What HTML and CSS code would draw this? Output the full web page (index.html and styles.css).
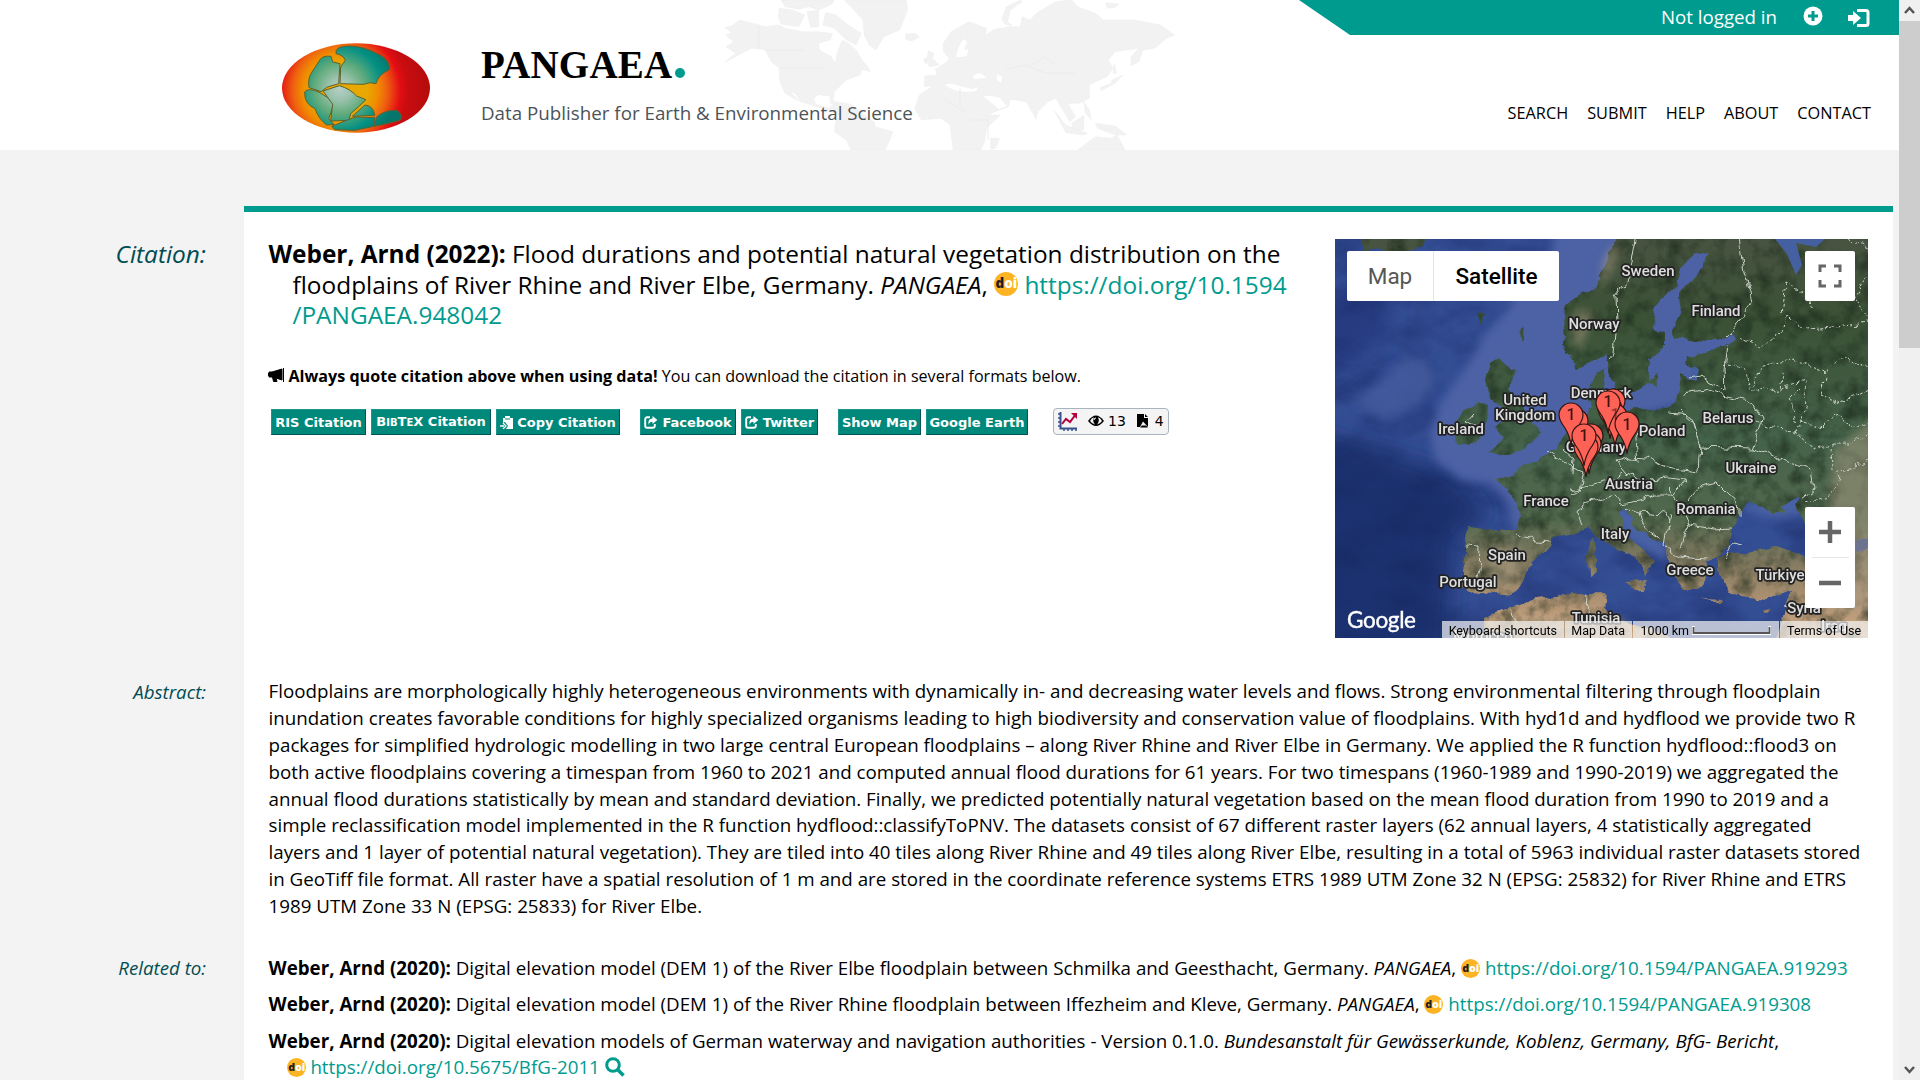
FILE: index.html
```html
<!DOCTYPE html>
<html lang="en"><head><meta charset="utf-8"><title>PANGAEA</title><link rel="stylesheet" href="styles.css"></head>
<body>
<svg class="defs" width="0" height="0">
<defs>
<symbol id="doi" viewBox="0 0 24 24"><circle cx="12" cy="12" r="12" fill="#fcb425"/><text x="1.500" y="16" font-family="Open Sans" font-weight="800" font-size="13.5" fill="#231f20">d</text><text x="10.2" y="16" font-family="Open Sans" font-weight="800" font-size="13.5" fill="#fff">oi</text></symbol>
<symbol id="share" viewBox="0 0 14 13"><path d="M6 1.3H3.2Q1.2 1.3 1.2 3.3v6.4q0 2 2 2h5.6q2 0 2-2V8" fill="none" stroke="#fff" stroke-width="1.9"/><path d="M8.5 0 13.4 4 8.5 8V5.7Q5.5 5.6 4.6 9 3.4 3 8.5 2.6z" fill="#fff"/></symbol>
</defs>
</svg>
<div class="page">
<main class="viewport">
<header class="header">
<svg class="world" width="490" height="150" viewBox="0 0 490 150"><g transform="translate(-20 0) scale(.3954 .3333)" fill="#f2f2f2" stroke="#ececec" stroke-width="1">
<path d="M100 60 148 74 165 80 200 75 215 85 260 95 300 95 335 100 330 120 300 130 302 150 330 168 342 188 348 155 360 120 375 130 395 150 410 180 425 200 430 215 410 208 405 225 370 240 340 275 338 300 352 318 330 310 328 288 300 284 288 295 292 312 325 325 345 305 380 312 442 368 442 380 488 395 480 420 468 450H382L370 420 340 395 342 370 350 345 325 332 290 318 255 305 240 280 228 275 252 305 215 280 202 245 200 205 180 185 165 150 130 145 98 165 62 187 90 160 65 140 85 125 65 105 80 98 62 82 80 78z"/>
<path d="M205 0H340L332 14 300 30 275 20 250 28 215 20zM200 25 235 30 265 45 250 80 205 72 198 50zM270 35 300 30 300 80 280 82zM318 38 345 45 375 75 408 100 395 135 370 120 340 85 310 75zM365 0H522L525 30 505 90 465 110 445 150 428 135 415 105 412 60 385 25zM520 103 545 100 555 112 535 123 520 118zM578 152 592 160 588 175 605 195 580 200 572 180zM565 175 575 178 570 195zM763 55 775 20 810 0 815 5 785 30 778 65 790 78 770 72z"/>
<path d="M615 130 635 95 680 65 725 85 722 105 745 88 780 80 810 80 815 50 835 60 850 40 900 5 940 0 955 20 1000 40 1020 60 1100 60 1165 75 1200 105 1180 115 1150 145 1120 150 1110 185 1090 198 1090 170 1110 145 1050 155 1033 180 1045 205 1030 230 1000 245 985 255 985 295 960 310 930 310 950 350 935 365 915 325 900 295 880 305 855 335 850 358 825 305 785 298 780 320 725 345 760 345 725 385 720 425 710 450H640L632 375 610 355 560 360 543 325 555 285 590 257 567 260 568 228 600 225 595 208 625 185 630 175 615 155z"/>
<path d="M735 415 758 415 748 445 735 448zM895 330 925 375 980 400 970 405 925 398zM940 370 972 345 970 390 945 390zM970 305 985 330 990 360 975 340zM1000 370 1050 378 1080 405 1050 405 1005 385zM1042 240 1070 225 1050 250 1015 272 1012 262 1040 250zM1048 190 1053 220 1045 220zM955 450 1000 410 1040 415 1055 405 1075 450zM1025 8 1060 12 1050 22 1030 25z"/></g>
<g fill="#fff"><path d="M236 57q3-14 8-18l3 3-3 8 4-1-1 7-6 1zM253 76q6-5 10-1l4 3-13 1zM277 74l5 3-1 6-4-3zM225 85q6-3 14 1l14 3 5-2-2 4-10 1-12-2-8-4zM263 96l16 13 8-3-7-8-8-2z"/></g>
<path d="M39 25v24M45 50h40M60 68h45M240 88v20M285 70l20-5 20 8 30 0M310 66l15-9 12 9M250 120h18v20M225 100l20 12" fill="none" stroke="#ececec"/></svg>
<svg class="logo" width="148" height="90" viewBox="126 128 444 270"><defs><radialGradient id="hot" gradientUnits="userSpaceOnUse" cx="300" cy="270" r="270"><stop offset=".3" stop-color="#e8a800"/><stop offset=".42" stop-color="#f08c00"/><stop offset=".52" stop-color="#ee6210"/><stop offset=".67" stop-color="#e30d13"/><stop offset=".75" stop-color="#c90d10"/><stop offset="1" stop-color="#b50b0c"/></radialGradient><radialGradient id="cool" gradientUnits="userSpaceOnUse" cx="300" cy="265" r="170"><stop offset="0" stop-color="#b5cfc5"/><stop offset=".2" stop-color="#9cc2ad"/><stop offset=".45" stop-color="#61ab7c"/><stop offset=".75" stop-color="#039083"/><stop offset="1" stop-color="#08756b"/></radialGradient></defs><ellipse cx="348" cy="263" rx="222" ry="134" fill="url(#hot)"/><g fill="url(#cool)" stroke="#5b6230" stroke-width="3" stroke-linejoin="round"><path d="M288 160Q284 138 325 137 370 136 422 165 452 185 448 208 415 222 408 250L390 247 370 252 300 250 302 200 316 180Q310 164 288 160z"/><path d="M240 178Q248 165 273 168L278 185 300 190 296 250 262 260 243 274 207 262Q202 235 216 215z"/><path d="M194 275Q205 260 240 277L275 300 280 315 266 355 282 372 260 374Q235 355 225 325 192 310 194 275z"/><path d="M249 272 298 256Q330 265 350 287L378 298 355 320 332 340 327 360 272 362 278 312z"/><path d="M275 378 325 358 348 350 405 352 402 378 345 390 285 388z"/><path d="M337 348 375 314Q400 316 404 345z"/><path d="M410 350Q435 328 470 330 492 345 480 360L440 370 403 378z"/></g></svg>
<div class="brand"><div class="name">PANGAEA<i></i></div><div class="tagline">Data Publisher for Earth &amp; Environmental Science</div></div>
<div class="top"><div class="login"><span>Not logged in</span><svg width="20" height="20" viewBox="0 0 20 20"><circle cx="10" cy="10" r="9.5" fill="#fff"/><path d="M10 5v10M5 10h10" stroke="#009b8f" stroke-width="3"/></svg><svg width="22" height="18" viewBox="0 0 22 18"><path d="M9 1.5h9q2 0 2 2v11q0 2-2 2H9" fill="none" stroke="#fff" stroke-width="3"/><path d="M0 6h5V2l8 7-8 7v-4H0z" fill="#fff"/></svg></div>
<nav class="nav"><a>SEARCH</a><a>SUBMIT</a><a>HELP</a><a>ABOUT</a><a>CONTACT</a></nav></div>
</header>
<div class="body">
<div class="labels"><div class="l1">Citation:</div><div class="l2">Abstract:</div><div class="l3">Related to:</div></div>
<article class="sheet">
<section class="cite">
<div class="left">
<h1 class="title"><b>Weber, Arnd (2022):</b> Flood durations and potential natural vegetation distribution on the<br>floodplains of River Rhine and River Elbe, Germany. <i>PANGAEA</i>, <svg class="doi big"><use href="#doi"/></svg> <a>https://doi.org/10.1594<br>/PANGAEA.948042</a></h1>
<p class="quote"><svg width="17" height="14" viewBox="0 0 17 14"><path d="M1 4h3L14 1v11L8 10l1 3.500H5.500L4.500 9H1zM15.500 0v14M.5 5v3" stroke="#000" stroke-width="1"/></svg><b>Always quote citation above when using data!</b> You can download the citation in several formats below.</p>
<div class="buttons">
<a class="ris">RIS Citation</a><a class="bib"><span>B<small>IB</small>T<small>E</small>X Citation</span></a><a class="copy"><svg width="13" height="13" viewBox="0 0 13 13"><path d="M3 2h2V0h5v2h3v11H6l2-3-3-4-2 1z" fill="#fff"/><path d="M0 10h4M3 7l3 3-3 3" fill="none" stroke="#fff" stroke-width="1.300"/><path d="M5 3h5" stroke="#00897b"/></svg>Copy Citation</a>
<a class="gap fb"><svg width="14" height="13"><use href="#share"/></svg>Facebook</a><a class="tw"><svg width="14" height="13"><use href="#share"/></svg>Twitter</a>
<a class="gap show">Show Map</a><a class="earth">Google Earth</a>
<span class="stats"><svg width="20" height="19" viewBox="0 0 20 19"><path d="M2.500 0v16.500H19" fill="none" stroke="#36518c" stroke-width="2"/><path d="M0 2h2M0 6h2M0 10h2M0 14h2M6 17v2M10 17v2M14 17v2M18 17v2" stroke="#36518c" stroke-width="1.500"/><path d="M4 12l4-5 4 3 6-8" fill="none" stroke="#b3003c" stroke-width="2"/><path d="M13 1h6v6z" fill="#b3003c"/></svg><svg class="eye" width="16" height="12" viewBox="0 0 16 12"><path d="M0 6Q8-5 16 6 8 16 0 6z"/><path d="M2 6q2-4 4-3.500Q4 6 7 9.500 4 9 2 6zM14 6q-2-4-4-3.500 2 3.500-1 7Q12 9 14 6z" fill="#f4f4f4"/><path d="M6 5q0-2 2-2" stroke="#fff" fill="none"/></svg><span>13</span><svg class="file" width="12" height="14" viewBox="0 0 12 14"><path d="M0 0h7v4h4v9L6 7.500 3 13H0z"/><path d="M8 0l3 3H8zM3 13.500l2-2h4l2 2z"/></svg><span>4</span></span>
</div></div>
<div class="map">
<svg width="533" height="399" viewBox="0 0 533 399"><defs>
<filter id="terrain" filterUnits="userSpaceOnUse" x="0" y="0" width="533" height="399" color-interpolation-filters="sRGB"><feTurbulence type="fractalNoise" baseFrequency=".055" numOctaves="5" seed="4" result="n"/><feDisplacementMap in="SourceGraphic" in2="n" scale="10" xChannelSelector="R" yChannelSelector="G" result="d"/><feColorMatrix in="n" values="0 0 0 0 .1 0 0 0 0 .16 0 0 0 0 .1 1.500 0 0 0 -.62" result="t"/><feComposite in="t" in2="d" operator="in" result="s"/><feMerge><feMergeNode in="d"/><feMergeNode in="s"/></feMerge></filter>
<filter id="wavy" filterUnits="userSpaceOnUse" x="0" y="0" width="533" height="399" color-interpolation-filters="sRGB"><feTurbulence type="fractalNoise" baseFrequency=".08" numOctaves="2" seed="7"/><feDisplacementMap in="SourceGraphic" scale="10" xChannelSelector="R" yChannelSelector="G"/></filter>
<filter id="seafloor" filterUnits="userSpaceOnUse" x="0" y="0" width="533" height="399" color-interpolation-filters="sRGB"><feTurbulence type="fractalNoise" baseFrequency=".02 .03" numOctaves="5" seed="11"/><feColorMatrix values="0 0 0 0 .08 0 0 0 0 .14 0 0 0 0 .36 1.600 0 0 0 -.6"/></filter>
<filter id="soft" filterUnits="userSpaceOnUse" x="-60" y="-60" width="660" height="520"><feGaussianBlur stdDeviation="11"/></filter>
<filter id="shelf" filterUnits="userSpaceOnUse" x="-60" y="-60" width="660" height="520"><feGaussianBlur stdDeviation="4"/></filter>
<linearGradient id="land" gradientUnits="userSpaceOnUse" x1="0" y1="0" x2="0" y2="399"><stop offset="0" stop-color="#485441"/><stop offset=".2" stop-color="#3b5136"/><stop offset=".5" stop-color="#45634a"/><stop offset=".7" stop-color="#52694e"/><stop offset=".8" stop-color="#7e785f"/><stop offset=".9" stop-color="#ab9071"/><stop offset="1" stop-color="#cfa985"/></linearGradient>
<path id="pin" d="M0 0C-1-8-3-12-6-17-9-21-12-25-12-30a12 12 0 0 1 24 0c0 5-3 9-6 13-3 5-5 9-6 17z" fill="#fe6256" stroke="#301512" stroke-width="1.200"/></defs>
<rect width="533" height="399" fill="#344e94"/>
<g filter="url(#soft)"><path d="M-30 190 60 215 120 235 155 275 120 300 110 430H-30z" fill="#1f3170"/><path d="M-20 60 60 40 50 100-20 150z" fill="#263a80"/></g>
<rect width="533" height="399" filter="url(#seafloor)" opacity=".55"/>
<g filter="url(#shelf)"><path d="M220-10 215 25 185 50 170 75 150 95 130 130 105 165 95 195 100 220 125 240 155 245 172 262 180 295 192 290 215 225 290 180 350 165 410 105 380-10z" fill="#4d62a5"/><path d="M20 165 70 120 90 120 100 140 85 165 50 180z" fill="#465d9e" opacity=".8"/><path d="M280 262l20 10 35 38-5 12-35-20-20-25zM406 266l60-12 5 20-30 6-30-8z" fill="#4a62a6"/></g>
<g filter="url(#terrain)" fill="url(#land)"><path d="M285-5 271 24 260 48 231 66 228 78 231 111 242 128 267 119 272 116 274 131 281 151 289 159 303 151 313 144 315 119 331 106 331 94 317 88 319 68 342 48 346 28 360 13 371 14 367 31 344 54 346 74 337 94 338 99 371 103 396 96 401 101 392 106 364 113 353 116 351 123 358 129 365 141 346 134 344 151 339 164 321 173 299 169 285 175 267 171 269 131 258 138 253 151 256 171 235 191 221 208 215 211 203 221 182 231 176 238 159 241 169 249 180 258 186 278 182 291 161 291 132 288 129 298 132 314 127 331 127 348 138 354 148 358 161 354 176 356 188 344 194 328 215 308 218 298 238 294 253 288 268 301 291 314 306 324 310 338 318 324 322 321 299 304 287 291 284 271 291 271 299 288 329 304 331 318 337 334 349 351 364 351 372 334 368 321 391 314 396 308 396 291 406 274 414 263 429 266 437 276 450 274 446 268 467 258 463 271 471 291 545 306V-5z"/><path d="M383 318 406 314 440 308 471 318 545 308V410H440L450 368 456 351 429 361 406 358 391 351 383 331z"/><path d="M150 410V378L176 368 199 359 253 354 272 354 270 371 280 381 329 394 350 410zM164 119 171 124 180 134 174 151 189 168 196 184 206 194 196 204 189 211 153 216 169 198 160 188 171 178 156 158 151 141 156 124zM128 171 142 163 153 168 151 188 142 204 121 206 117 191zM24-5 92-5 88 9 60 16 40 10 28 14zM254 300l6-3 1 18-6 3zM253 318l9-2v18l-8 4zM290 343l22-1-5 10zM365 360l25 1-3 4zM427 371l13-3-8 7zM312 145l12-14-4 18zM184 93l5-7-3 18zM275 158l10 4-5 7zM143 75l8-4-6 14z"/></g>
<path d="M356 131q3-7 8 0l-3 11q-8-3-5-11M440 0H490l-9 8-20-4 6 22-6 10-9-21z" fill="#4560a0"/>
<g fill="#b5a48a" opacity=".45" filter="url(#shelf)"><path d="M268 20l12-15 6 10-20 35zM240 70l20 5-15 35-8-10zM165 305l25 8-15 35-25-5zM500 210l40-30v190h-60l10-60zM180 380h110v24H150z"/></g>
<g filter="url(#wavy)" fill="none" stroke="#cbd2c8" stroke-width="1"><path d="M300 0 296 22 293 39 281 57 282 85 279 113 272 121M404 0 409 32 417 62 405 82 392 96M392 106 389 130 390 152 366 137 354 139M346 154 370 151 391 158 418 164 427 180 416 210 365 208 359 184 346 172M333 174 356 176 365 205 363 233 333 229 312 220 297 219 282 223 292 235 312 241 333 239 351 241 340 255 318 255 308 261 287 265 279 256 249 264 242 275 247 285M235 251 258 246 278 241 287 234M212 212 230 225 249 233 245 251 235 256M229 210 238 218 237 234M300 187 303 224M353 262 365 248 382 244 392 254 405 266 405 277M333 249 345 262 354 286 380 290 396 289M291 269 305 273 310 289 326 300M335 276 330 308 342 318 371 320M305 273 330 275 335 290M354 286 345 308M131 307 145 308 144 330 140 345M182 296 202 301 218 302M416 210 435 215 452 223 475 231 478 250 465 260M253 355 252 375 263 399M390 320 398 306 407 308M451 366 466 370 490 352 518 350M175 370 182 383M140 174 132 183 142 187"/><path d="M392 125 410 130 416 151 446 150 469 143 470 175 461 192 476 210 497 205 498 231M405 99 426 109 448 92 452 77 470 90 500 88 533 84M451 45 447 75M451 45 472 55 478 70M417 147 430 125 459 121 490 132 508 117 533 130M485 155 505 165 533 150M465 150 455 160 461 181 488 188M512 0 533 10M533 35 520 60 533 80M470 265 498 255 505 235 533 220M500 270l8 20-2 50 15 25M488 188 500 175 520 190 533 180M497 205 515 205 533 195M446 150 450 130M490 132 485 155M417 180 440 190 461 192" stroke-dasharray="3 2"/></g>
<g class="country"><text x="313" y="37">Sweden</text><text x="381" y="77">Finland</text><text x="259" y="90">Norway</text><text x="266" y="159">Denmark</text><text x="190" y="166">United</text><text x="190" y="181">Kingdom</text><text x="126" y="195">Ireland</text><text x="327" y="197">Poland</text><text x="393" y="184">Belarus</text><text x="261" y="213">Germany</text><text x="416" y="234">Ukraine</text><text x="294" y="250">Austria</text><text x="211" y="267">France</text><text x="371" y="275">Romania</text><text x="280" y="300">Italy</text><text x="172" y="321">Spain</text><text x="355" y="336">Greece</text><text x="445" y="341">Türkiye</text><text x="133" y="348">Portugal</text><text x="261" y="384">Tunisia</text><text x="469" y="374">Syria</text><text x="499" y="392">Iraq</text><text x="148" y="402">Morocco</text></g>
<use href="#pin" x="278" y="192"/><use href="#pin" x="275" y="200"/><use href="#pin" x="280" y="207"/><use href="#pin" x="273" y="194"/><use href="#pin" x="292" y="215"/><use href="#pin" x="241" y="212"/><use href="#pin" x="236" y="206"/><use href="#pin" x="256" y="227"/><use href="#pin" x="254" y="235"/><use href="#pin" x="251" y="238"/><use href="#pin" x="249" y="227"/>
<g class="nums"><text x="273" y="168">1</text><text x="280" y="181" opacity=".6">1</text><text x="292" y="191">1</text><text x="236" y="181">1</text><text x="249" y="202">1</text></g>
<text class="google" x="12" y="389" textLength="69">Google</text></svg>
<div class="type"><span>Map</span><b>Satellite</b></div>
<div class="full"><svg width="24" height="24" viewBox="0 0 24 24"><path d="M2 8V2h6M16 2h6v6M22 16v6h-6M8 22H2v-6" fill="none" stroke="#666" stroke-width="3"/></svg></div>
<div class="zoom"><svg width="50" height="101" viewBox="0 0 50 101"><path d="M14 25h22M25 14v22M14 76h22" stroke="#666" stroke-width="4.500"/><path d="M7 50.500h37" stroke="#e6e6e6"/></svg></div>
<div class="credits"><span class="keys">Keyboard shortcuts</span><span class="data">Map Data</span><span class="scale">1000 km <svg width="79" height="9" viewBox="0 0 79 9"><path d="M1 0v7.500h77V0" fill="none" stroke="#fff" stroke-width="3"/><path d="M1.500 1v6h76V1" fill="none" stroke="#555" stroke-width="1.800"/></svg></span><span class="terms">Terms of Use</span></div>
</div>
</section>
<section class="abstract">Floodplains are morphologically highly heterogeneous environments with dynamically in- and decreasing water levels and flows. Strong environmental filtering through floodplain<br>inundation creates favorable conditions for highly specialized organisms leading to high biodiversity and conservation value of floodplains. With hyd1d and hydflood we provide two R<br>packages for simplified hydrologic modelling in two large central European floodplains – along River Rhine and River Elbe in Germany. We applied the R function hydflood::flood3 on<br>both active floodplains covering a timespan from 1960 to 2021 and computed annual flood durations for 61 years. For two timespans (1960-1989 and 1990-2019) we aggregated the<br>annual flood durations statistically by mean and standard deviation. Finally, we predicted potentially natural vegetation based on the mean flood duration from 1990 to 2019 and a<br>simple reclassification model implemented in the R function hydflood::classifyToPNV. The datasets consist of 67 different raster layers (62 annual layers, 4 statistically aggregated<br>layers and 1 layer of potential natural vegetation). They are tiled into 40 tiles along River Rhine and 49 tiles along River Elbe, resulting in a total of 5963 individual raster datasets stored<br>in GeoTiff file format. All raster have a spatial resolution of 1 m and are stored in the coordinate reference systems ETRS 1989 UTM Zone 32 N (EPSG: 25832) for River Rhine and ETRS<br>1989 UTM Zone 33 N (EPSG: 25833) for River Elbe.</section>
<section class="related">
<p><b>Weber, Arnd (2020):</b> Digital elevation model (DEM 1) of the River Elbe floodplain between Schmilka and Geesthacht, Germany. <i>PANGAEA</i>, <svg class="doi"><use href="#doi"/></svg> <a>https://doi.org/10.1594/PANGAEA.919293</a></p>
<p><b>Weber, Arnd (2020):</b> Digital elevation model (DEM 1) of the River Rhine floodplain between Iffezheim and Kleve, Germany. <i>PANGAEA</i>, <svg class="doi"><use href="#doi"/></svg> <a>https://doi.org/10.1594/PANGAEA.919308</a></p>
<p><b>Weber, Arnd (2020):</b> Digital elevation models of German waterway and navigation authorities - Version 0.1.0. <i>Bundesanstalt für Gewässerkunde, Koblenz, Germany, BfG- Bericht</i>,<br><svg class="doi"><use href="#doi"/></svg> <a>https://doi.org/10.5675/BfG-2011</a> <svg class="mag" width="20" height="20" viewBox="0 0 20 20"><circle cx="8" cy="8" r="6.300" fill="none" stroke="#009b8f" stroke-width="3"/><path d="M12.500 12.500 18.500 18.500" stroke="#009b8f" stroke-width="3.500"/></svg></p>
</section>
</article>
</div>
</main>
<aside class="scroll"><svg width="21" height="21" viewBox="0 0 21 21"><path d="M6 13l4.500-5L15 13" fill="none" stroke="#555" stroke-width="2.500"/></svg><div class="thumb"></div><svg class="down" width="21" height="21" viewBox="0 0 21 21"><path d="M6 8l4.500 5L15 8" fill="none" stroke="#555" stroke-width="2.500"/></svg></aside>
</div></body></html>
```
FILE: styles.css
```css
*{box-sizing:border-box}
body{margin:0;height:1080px;overflow:hidden;font-family:"Open Sans",sans-serif;color:#000;background:#f3f3f3}
svg{text-indent:0}
.defs{position:absolute}
.page{display:flex;height:1080px}
.viewport{width:1899px;height:1080px;overflow:hidden}
.header{position:relative;height:150px;background:#fff;display:flex;padding-left:282px}
.world{position:absolute;left:720px;top:0}
.logo{margin-top:43px;flex:none}
.brand{position:relative;margin:43px 0 0 51px;white-space:nowrap}
.name{font:bold 39px/44px "Liberation Serif",serif;letter-spacing:.2px}
.name i{display:inline-block;width:10px;height:10px;border-radius:50%;background:#009b8f;margin-left:3px}
.tagline{font-size:18.770px;line-height:26px;color:#4d5358;margin-top:13px}
.top{margin-left:auto;width:600px;position:relative}
.login{height:35px;background:#009b8f;clip-path:polygon(0 0,100% 0,100% 100%,51px 100%);color:#fff;font-size:18.700px;display:flex;align-items:center;justify-content:flex-end;padding-right:29px;line-height:33px}
.login span{margin-top:-3px}
.login svg:nth-of-type(1){margin:-3px 25px 0 26px}
.nav{display:flex;justify-content:flex-end;gap:19px;font-size:16.300px;line-height:22px;padding:67px 28px 0 0}
.body{display:flex;padding-top:56px}
.labels{width:244px;flex:none;padding-right:38px;text-align:right;font-style:italic;color:#004c54;font-size:18.700px}
.l1{font-size:24.400px;line-height:30px;padding-top:33px}
.l2{line-height:27px;padding-top:409px}
.l3{line-height:27px;padding-top:249px}
.sheet{width:1649px;height:900px;background:#fff;border-top:6px solid #009b8f;padding:27px 25px 0 24.500px;white-space:nowrap}
a{color:#009b8f}
.nav a{color:#000}
.cite{display:flex;height:439.400px}
.left{width:1066.500px;flex:none}
.title{font-size:24.400px;font-weight:400;line-height:30.500px;margin:0;padding-left:24px;text-indent:-24px}
.doi{width:19px;height:19px;vertical-align:-3px}
.doi.big{width:24px;height:24px;vertical-align:-2px}
.quote{font-size:16.120px;line-height:22px;margin:34px 0 0 -1px}
.quote svg{margin-right:4px}
.buttons{display:flex;gap:5px;padding:22px 0 0 2.500px;height:49px}
.buttons a{height:26px;background:#00897b;border:1px solid;border-color:#1a978a #00525a #00525a #1a978a;color:#fff;font:bold 13px/25px "DejaVu Sans",sans-serif;display:flex;justify-content:center;align-items:center;padding-top:1px}
.buttons a svg{margin-right:4px}
.buttons small{font-size:10px}
.buttons .gap{margin-left:15px}
.ris{width:95px}
.bib{width:120px}
.copy{width:124px}
.fb{width:96px}
.tw{width:77px}
.show{width:83px}
.earth{width:102px}
.stats{margin:-1px 0 0 20px;width:116px;height:27px;border:1px solid #aab4c0;border-radius:4px;background:#f4f4f4;font:14px/26px "DejaVu Sans",sans-serif;display:flex;align-items:center;padding-left:4px}
.eye{margin:0 4px 0 10px}
.file{margin:0 6px 0 11px}
.map{position:relative;width:533px;height:399px;overflow:hidden;font-family:Roboto,sans-serif}
.country text{font:500 15px Roboto,sans-serif;text-anchor:middle;fill:#dedede;stroke:#222;stroke-width:3.500px;paint-order:stroke;stroke-linejoin:round}
.nums text{font:500 16px Roboto,sans-serif;text-anchor:middle;fill:#421410}
.google{font:22.500px Lato,sans-serif;fill:#fff;stroke:#fff;stroke-width:.4px}
.type{position:absolute;left:12px;top:12px;width:212px;height:50px;background:#fff;border-radius:2px;display:flex;font-size:22.500px;line-height:50px}
.type span{width:87px;text-align:center;color:#565656;border-right:1px solid #e5e5e5}
.type b{font-weight:500;flex:1;text-align:center}
.full{position:absolute;left:470px;top:12px;width:50px;height:50px;background:#fff;border-radius:2px;padding:13px}
.zoom{position:absolute;left:470px;top:268px;width:50px;height:101px;background:#fff;border-radius:2px}
.credits{position:absolute;left:107px;bottom:0;display:flex;gap:1px;height:17px;font-size:12.500px;line-height:19px;width:426px}
.credits span{background:rgba(245,245,245,.7);text-align:center}
.keys{width:122px}
.data{width:67px}
.scale{width:147px}
.terms{width:88px}
.abstract{font-size:18.760px;line-height:26.800px}
.related{font-size:18.760px;line-height:26px;padding-top:35px}
.related p{margin:0 0 10.700px;padding-left:18px;text-indent:-18px}
.mag{vertical-align:-3px}
.scroll{width:21px;background:#f0f0f0;display:flex;flex-direction:column}
.thumb{height:327px;background:#cdcdcd}
.down{margin-top:auto}
```
